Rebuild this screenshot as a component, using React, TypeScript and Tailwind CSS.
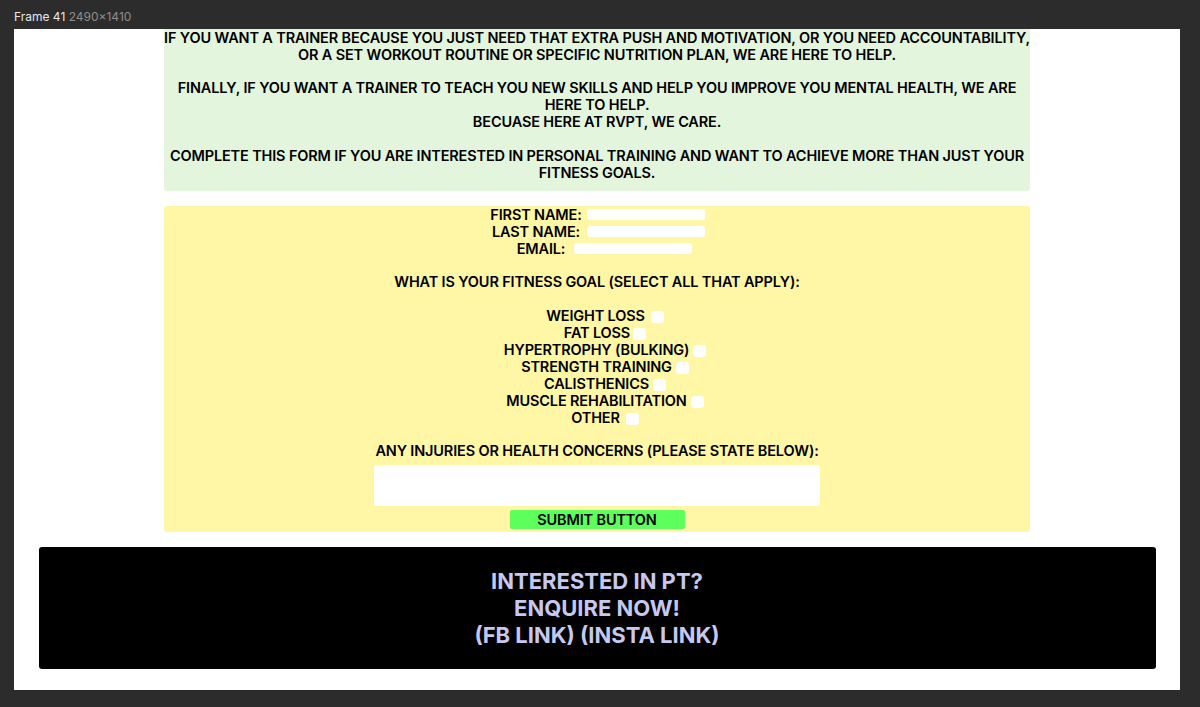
import React from "react";

const GOALS = [
    { label: "WEIGHT LOSS", gap: "ml-[6px]" },
    { label: "FAT LOSS", gap: "ml-[3px]" },
    { label: "HYPERTROPHY (BULKING)", gap: "ml-[4px]" },
    { label: "STRENGTH TRAINING", gap: "ml-[4px]" },
    { label: "CALISTHENICS", gap: "ml-[4px]" },
    { label: "MUSCLE REHABILITATION", gap: "ml-[4px]" },
    { label: "OTHER", gap: "ml-[6px]" },
];

const Field = ({ label, gap }: { label: string; gap: string }) => (
    <div className="flex items-center justify-center h-[17px]">
        <span>{label}</span>
        <span className={`${gap} inline-block w-[118px] h-[11px] rounded-[3px] bg-white`} />
    </div>
);

const App = () => {
    return (
        <div
            className="w-[1200px] h-[707px] bg-[#2c2c2c] overflow-hidden"
            style={{ fontFamily: "Inter, 'Noto Sans', sans-serif" }}
        >
            <div className="h-[29px] pl-[14px] pt-[9px] text-[12px] leading-[16px]">
                <span className="text-[#e6e6e6]">Frame 41</span>{" "}
                <span className="text-[#8c8c8c]">2490×1410</span>
            </div>

            <div className="ml-[14px] w-[1166px] h-[661px] bg-white flex flex-col items-center text-black font-semibold text-[14.5px] leading-[17px] tracking-[-0.15px] whitespace-nowrap">
                <div className="w-[866px] bg-[#e4f5dd] rounded-b-[3px] pb-[10px] text-center">
                    <p>
                        IF YOU WANT A TRAINER BECAUSE YOU JUST NEED THAT EXTRA PUSH AND MOTIVATION, OR YOU NEED ACCOUNTABILITY,
                        <br />
                        OR A SET WORKOUT ROUTINE OR SPECIFIC NUTRITION PLAN, WE ARE HERE TO HELP.
                    </p>
                    <p className="mt-[16px]">
                        FINALLY, IF YOU WANT A TRAINER TO TEACH YOU NEW SKILLS AND HELP YOU IMPROVE YOU MENTAL HEALTH, WE ARE
                        <br />
                        HERE TO HELP.
                    </p>
                    <p>BECUASE HERE AT RVPT, WE CARE.</p>
                    <p className="mt-[17px]">
                        COMPLETE THIS FORM IF YOU ARE INTERESTED IN PERSONAL TRAINING AND WANT TO ACHIEVE MORE THAN JUST YOUR
                        <br />
                        FITNESS GOALS.
                    </p>
                </div>

                <div className="mt-[15px] w-[866px] h-[326px] bg-[#fff7a6] rounded-[3px] flex flex-col items-center text-center">
                    <div className="ml-[1px]">
                        <Field label="FIRST NAME:" gap="ml-[5px]" />
                    </div>
                    <div className="ml-[3px]">
                        <Field label="LAST NAME:" gap="ml-[7px]" />
                    </div>
                    <div className="ml-[15px]">
                        <Field label="EMAIL:" gap="ml-[9px]" />
                    </div>

                    <p className="mt-[16px]">WHAT IS YOUR FITNESS GOAL (SELECT ALL THAT APPLY):</p>

                    <div className="mt-[17px] flex flex-col items-center">
                        {GOALS.map((g) => (
                            <div key={g.label} className="flex items-center h-[17px] ml-[16px]">
                                <span>{g.label}</span>
                                <span className={`${g.gap} inline-block w-[13px] h-[12px] mt-[2px] rounded-[3px] bg-white`} />
                            </div>
                        ))}
                    </div>

                    <p className="mt-[16px]">ANY INJURIES OR HEALTH CONCERNS (PLEASE STATE BELOW):</p>

                    <div className="mt-[6px] w-[446px] h-[41px] bg-white rounded-[3px]" />

                    <button className="mt-[4px] w-[175px] h-[19px] bg-[#5cff5c] rounded-[2px] text-black font-semibold text-[14.5px] leading-[19px] tracking-[-0.15px]">
                        SUBMIT BUTTON
                    </button>
                </div>

                <div className="mt-[15px] w-[1117px] h-[122px] bg-black rounded-[3px] flex flex-col items-center justify-center text-center text-[#c6c8ef] font-bold text-[22px] leading-[27px] tracking-normal">
                    <p>INTERESTED IN PT?</p>
                    <p>ENQUIRE NOW!</p>
                    <p>(FB LINK) (INSTA LINK)</p>
                </div>
            </div>
        </div>
    );
};

export default App;
